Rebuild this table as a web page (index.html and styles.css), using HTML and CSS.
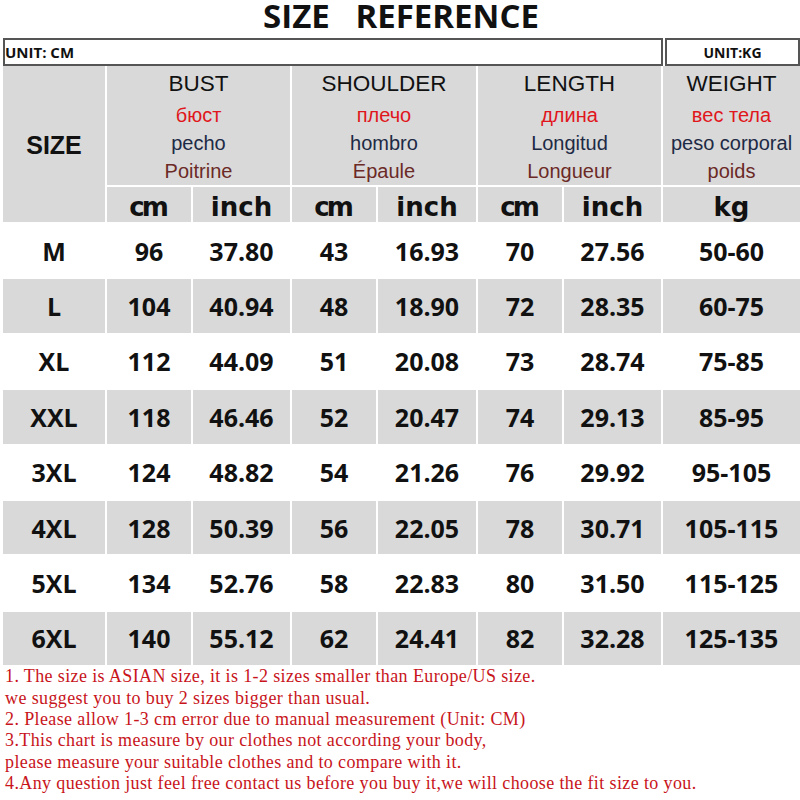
FILE: index.html
```html
<!DOCTYPE html>
<html>
<head>
<meta charset="utf-8">
<link rel="stylesheet" href="styles.css">
</head>
<body>
<div class="page">
  <h1 class="title">SIZE&nbsp;&nbsp;&nbsp;REFERENCE</h1>
  <div class="units">
    <div class="unit unit-cm">UNIT: CM</div>
    <div class="unit unit-kg">UNIT:KG</div>
  </div>
  <div class="chart">
    <div class="hcell size-head">SIZE</div>
    <div class="hcell group span2">
      <div class="en">BUST</div><div class="ru">бюст</div><div class="es">pecho</div><div class="fr">Poitrine</div>
    </div>
    <div class="hcell group span2">
      <div class="en">SHOULDER</div><div class="ru">плечо</div><div class="es">hombro</div><div class="fr">Épaule</div>
    </div>
    <div class="hcell group span2">
      <div class="en">LENGTH</div><div class="ru">длина</div><div class="es">Longitud</div><div class="fr">Longueur</div>
    </div>
    <div class="hcell group">
      <div class="en">WEIGHT</div><div class="ru">вес тела</div><div class="es">peso corporal</div><div class="fr">poids</div>
    </div>
    <div class="hcell unitc cm">cm</div><div class="hcell unitc">inch</div>
    <div class="hcell unitc cm">cm</div><div class="hcell unitc">inch</div>
    <div class="hcell unitc cm">cm</div><div class="hcell unitc">inch</div>
    <div class="hcell unitc">kg</div>

    <div class="cell">M</div><div class="cell">96</div><div class="cell">37.80</div><div class="cell">43</div><div class="cell">16.93</div><div class="cell">70</div><div class="cell">27.56</div><div class="cell">50-60</div>
    <div class="cell g">L</div><div class="cell g">104</div><div class="cell g">40.94</div><div class="cell g">48</div><div class="cell g">18.90</div><div class="cell g">72</div><div class="cell g">28.35</div><div class="cell g">60-75</div>
    <div class="cell">XL</div><div class="cell">112</div><div class="cell">44.09</div><div class="cell">51</div><div class="cell">20.08</div><div class="cell">73</div><div class="cell">28.74</div><div class="cell">75-85</div>
    <div class="cell g">XXL</div><div class="cell g">118</div><div class="cell g">46.46</div><div class="cell g">52</div><div class="cell g">20.47</div><div class="cell g">74</div><div class="cell g">29.13</div><div class="cell g">85-95</div>
    <div class="cell">3XL</div><div class="cell">124</div><div class="cell">48.82</div><div class="cell">54</div><div class="cell">21.26</div><div class="cell">76</div><div class="cell">29.92</div><div class="cell">95-105</div>
    <div class="cell g">4XL</div><div class="cell g">128</div><div class="cell g">50.39</div><div class="cell g">56</div><div class="cell g">22.05</div><div class="cell g">78</div><div class="cell g">30.71</div><div class="cell g">105-115</div>
    <div class="cell">5XL</div><div class="cell">134</div><div class="cell">52.76</div><div class="cell">58</div><div class="cell">22.83</div><div class="cell">80</div><div class="cell">31.50</div><div class="cell">115-125</div>
    <div class="cell g">6XL</div><div class="cell g">140</div><div class="cell g">55.12</div><div class="cell g">62</div><div class="cell g">24.41</div><div class="cell g">82</div><div class="cell g">32.28</div><div class="cell g">125-135</div>
  </div>
  <div class="notes">
    <p>1. The size is ASIAN size, it is 1-2 sizes smaller than Europe/US size.</p>
    <p>we suggest you to buy 2 sizes bigger than usual.</p>
    <p>2. Please allow 1-3 cm error due to manual measurement (Unit: CM)</p>
    <p>3.This chart is measure by our clothes not according your body,</p>
    <p>please measure your suitable clothes and to compare with it.</p>
    <p>4.Any question just feel free contact us before you buy it,we will choose the fit size to you.</p>
  </div>
</div>
</body>
</html>
```

FILE: styles.css
```css
html, body {
  margin: 0;
  padding: 0;
  background: #ffffff;
}
.page {
  width: 800px;
  height: 800px;
  overflow: hidden;
}
.title {
  margin: 0;
  height: 38px;
  padding-top: 1px;
  box-sizing: border-box;
  line-height: 30px;
  text-align: center;
  font-family: "Open Sans", sans-serif;
  font-weight: 700;
  font-size: 33px;
  color: #111;
  padding-left: 2px;
}
.units {
  display: flex;
  gap: 2px;
  padding-left: 3px;
  height: 28px;
}
.unit {
  box-sizing: border-box;
  height: 28px;
  border: 2px solid #555;
  font-family: "Open Sans", sans-serif;
  font-weight: 700;
  font-size: 15px;
  line-height: 24px;
  color: #111;
}
.unit-cm {
  width: 660px;
  padding-left: 0;
}
.unit-kg {
  width: 135px;
  text-align: center;
  padding-top: 1px;
  font-size: 14px;
}
.chart {
  display: grid;
  margin-left: 3px;
  grid-template-columns: 102px 84px 97px 84px 98px 84px 97px 137px;
  grid-template-rows: 119px 35px repeat(8, 53.4px);
  gap: 2px;
  background: #fff;
}
.hcell {
  background: #d9d9d9;
  display: flex;
  flex-direction: column;
  align-items: center;
  justify-content: center;
}
.size-head {
  grid-row: 1 / span 2;
  font-family: "Liberation Sans", Arial, sans-serif;
  font-weight: 700;
  font-size: 25px;
  color: #111;
  padding-top: 2px;
}
.span2 {
  grid-column: span 2;
}
.group {
  font-family: "Liberation Sans", Arial, sans-serif;
  font-size: 20px;
  line-height: 28px;
  padding-top: 1px;
}
.group .en {
  font-size: 22.5px;
  line-height: 34px;
  color: #111;
}
.group .ru {
  color: #e0161c;
}
.group .es {
  color: #1d2a45;
}
.group .fr {
  color: #6b2a26;
}
.unitc {
  font-family: "DejaVu Sans", sans-serif;
  font-weight: 700;
  font-size: 26px;
  color: #111;
  padding-top: 4px;
}
.unitc.cm {
  letter-spacing: -3px;
  padding-right: 3px;
}
.cell {
  display: flex;
  align-items: center;
  justify-content: center;
  font-family: "Open Sans", sans-serif;
  font-weight: 700;
  font-size: 25px;
  color: #111;
  background: #fff;
}
.cell.g {
  background: #d9d9d9;
}
.notes {
  padding: 1px 0 0 5px;
  font-family: "Liberation Serif", "Times New Roman", serif;
  font-size: 18px;
  letter-spacing: 0.38px;
  line-height: 21.4px;
  color: #c8141b;
}
.notes p {
  margin: 0;
  white-space: nowrap;
}
```
